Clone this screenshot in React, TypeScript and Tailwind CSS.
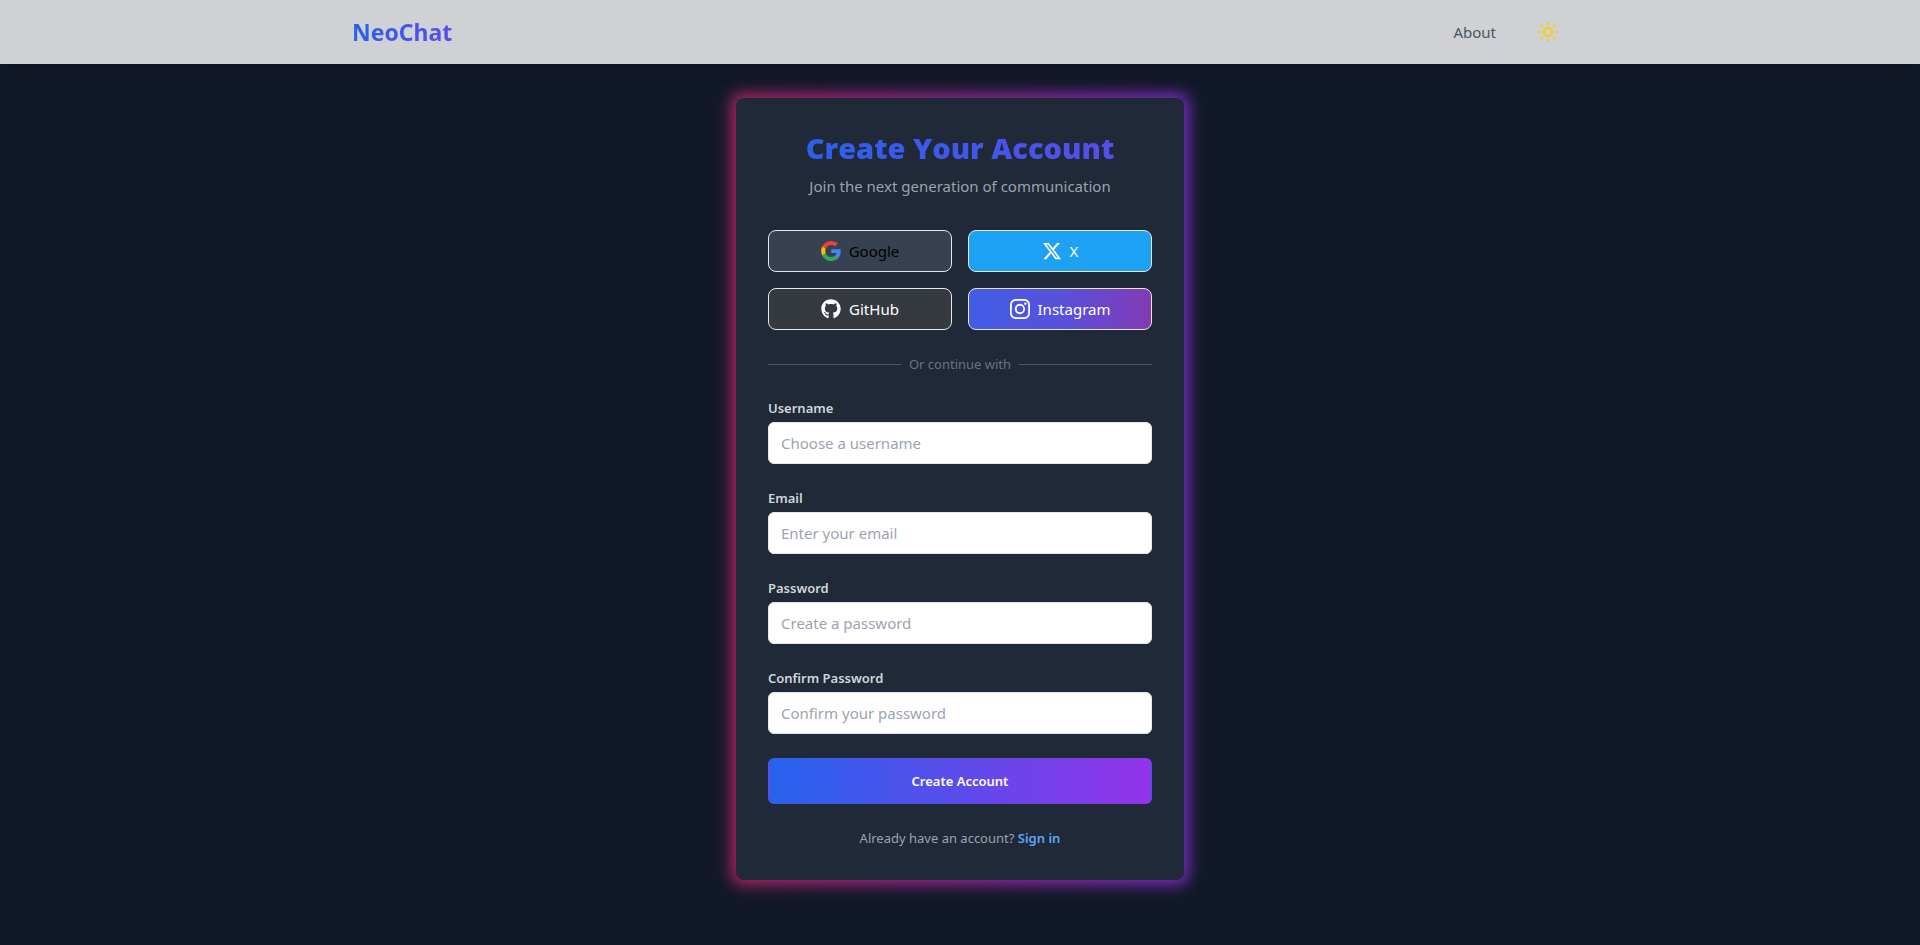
import { BsInstagram } from "react-icons/bs";
import { FaGithub, FaXTwitter } from "react-icons/fa6";

const fields = [
  { id: "username", label: "Username", type: "text", placeholder: "Choose a username" },
  { id: "email", label: "Email", type: "email", placeholder: "Enter your email" },
  { id: "password", label: "Password", type: "password", placeholder: "Create a password" },
  { id: "confirm", label: "Confirm Password", type: "password", placeholder: "Confirm your password" },
];

function SunIcon() {
  return (
    <svg viewBox="0 0 20 20" className="h-5 w-5" fill="none" stroke="currentColor" strokeWidth="2" aria-hidden="true">
      <circle cx="10" cy="10" r="4.1" />
      <path d="M10 0v3M10 17v3M0 10h3M17 10h3M3.1 3.1l2 2M14.9 14.9l2 2M3.1 16.9l2-2M14.9 5.1l2-2" />
    </svg>
  );
}

function GoogleIcon() {
  return (
    <svg viewBox="0 0 24 24" className="h-5 w-5" aria-hidden="true">
      <path fill="#4285F4" d="M23.745 12.27c0-.79-.07-1.54-.19-2.27h-11.3v4.51h6.47c-.29 1.48-1.14 2.73-2.4 3.58v3h3.86c2.26-2.09 3.56-5.17 3.56-8.82z" />
      <path fill="#34A853" d="M12.255 24c3.24 0 5.95-1.08 7.93-2.91l-3.86-3c-1.08.72-2.45 1.16-4.07 1.16-3.13 0-5.78-2.11-6.73-4.96h-3.98v3.09C3.515 21.3 7.565 24 12.255 24z" />
      <path fill="#FBBC05" d="M5.525 14.29c-.25-.72-.38-1.49-.38-2.29s.14-1.57.38-2.29V6.62h-3.98a11.86 11.86 0 0 0 0 10.76l3.98-3.09z" />
      <path fill="#EA4335" d="M12.255 4.75c1.77 0 3.35.61 4.6 1.8l3.42-3.42C18.205 1.19 15.495 0 12.255 0c-4.69 0-8.74 2.7-10.71 6.62l3.98 3.09c.95-2.85 3.6-4.96 6.73-4.96z" />
    </svg>
  );
}

const socialBase = "flex items-center justify-center gap-2 rounded-lg border border-[#e5e7eb] px-4 py-2";

export default function App() {
  return (
    <div className="min-h-screen bg-[#111827] font-['Noto_Sans','Open_Sans',sans-serif] text-[15px] leading-6">
      <header className="bg-[#cfd1d4] shadow-lg">
        <nav className="mx-auto flex h-16 max-w-7xl items-center justify-between px-8">
          <a href="#" className="bg-linear-to-r/srgb from-[#2563eb] to-[#5c4beb] bg-clip-text text-[23px] leading-8 font-bold text-transparent">
            NeoChat
          </a>
          <div className="flex items-center gap-8">
            <a href="#about" className="text-[#4b5563]">About</a>
            <button type="button" aria-label="Toggle theme" className="flex h-10 w-10 items-center justify-center text-[#facc15]">
              <SunIcon />
            </button>
          </div>
        </nav>
      </header>

      <main className="flex justify-center px-4 pt-[34px] pb-8">
        <div className="relative w-full max-w-md">
          <div className="absolute -inset-1 rounded-lg bg-linear-to-r/srgb from-[#db2777] to-[#9333ea] opacity-85 blur-sm" />
          <div className="relative rounded-lg bg-[#1f2937] p-8">
            <h1 className="bg-linear-to-r/srgb from-[#2563eb] to-[#5c4beb] bg-clip-text text-center font-['Open_Sans','Noto_Sans',sans-serif] text-[29px] leading-9 font-extrabold text-transparent">
              Create Your Account
            </h1>
            <p className="mt-2 text-center text-[#9ca3af]">Join the next generation of communication</p>

            <div className="mt-8 grid grid-cols-2 gap-4">
              <button type="button" className={`${socialBase} bg-[#374151] text-black`}>
                <GoogleIcon />
                Google
              </button>
              <button type="button" className={`${socialBase} bg-[#1da1f2] text-white`}>
                <FaXTwitter className="h-5 w-5" />
                X
              </button>
              <button type="button" className={`${socialBase} bg-[#343a40] text-white`}>
                <FaGithub className="h-5 w-5" />
                GitHub
              </button>
              <button type="button" className={`${socialBase} bg-linear-to-r/srgb from-[#405de6] via-[#5851db] to-[#833ab4] text-white`}>
                <BsInstagram className="h-5 w-5" />
                Instagram
              </button>
            </div>

            <div className="mt-6 flex items-center gap-2">
              <div className="h-px flex-1 bg-[#4b5563]" />
              <span className="text-[13px] leading-5 text-[#6b7280]">Or continue with</span>
              <div className="h-px flex-1 bg-[#4b5563]" />
            </div>

            <form className="mt-6 flex flex-col gap-6">
              {fields.map((f) => (
                <div key={f.id} className="flex flex-col gap-1">
                  <label htmlFor={f.id} className="text-[13px] leading-5 font-semibold text-[#d1d5db]">
                    {f.label}
                  </label>
                  <input
                    id={f.id}
                    type={f.type}
                    placeholder={f.placeholder}
                    className="w-full rounded-md border border-[#e5e7eb] bg-white px-3 py-2 text-black placeholder:text-[#9ca3af]"
                  />
                </div>
              ))}
              <button
                type="submit"
                className="rounded-md border border-transparent bg-linear-to-r/srgb from-[#2563eb] to-[#9333ea] px-4 py-3 text-[13px] leading-5 font-semibold text-white"
              >
                Create Account
              </button>
            </form>

            <p className="mt-6 text-center text-[13px] leading-5 text-[#9ca3af]">
              Already have an account?{" "}
              <a href="#signin" className="font-semibold text-[#60a5fa]">Sign in</a>
            </p>
          </div>
        </div>
      </main>
    </div>
  );
}
